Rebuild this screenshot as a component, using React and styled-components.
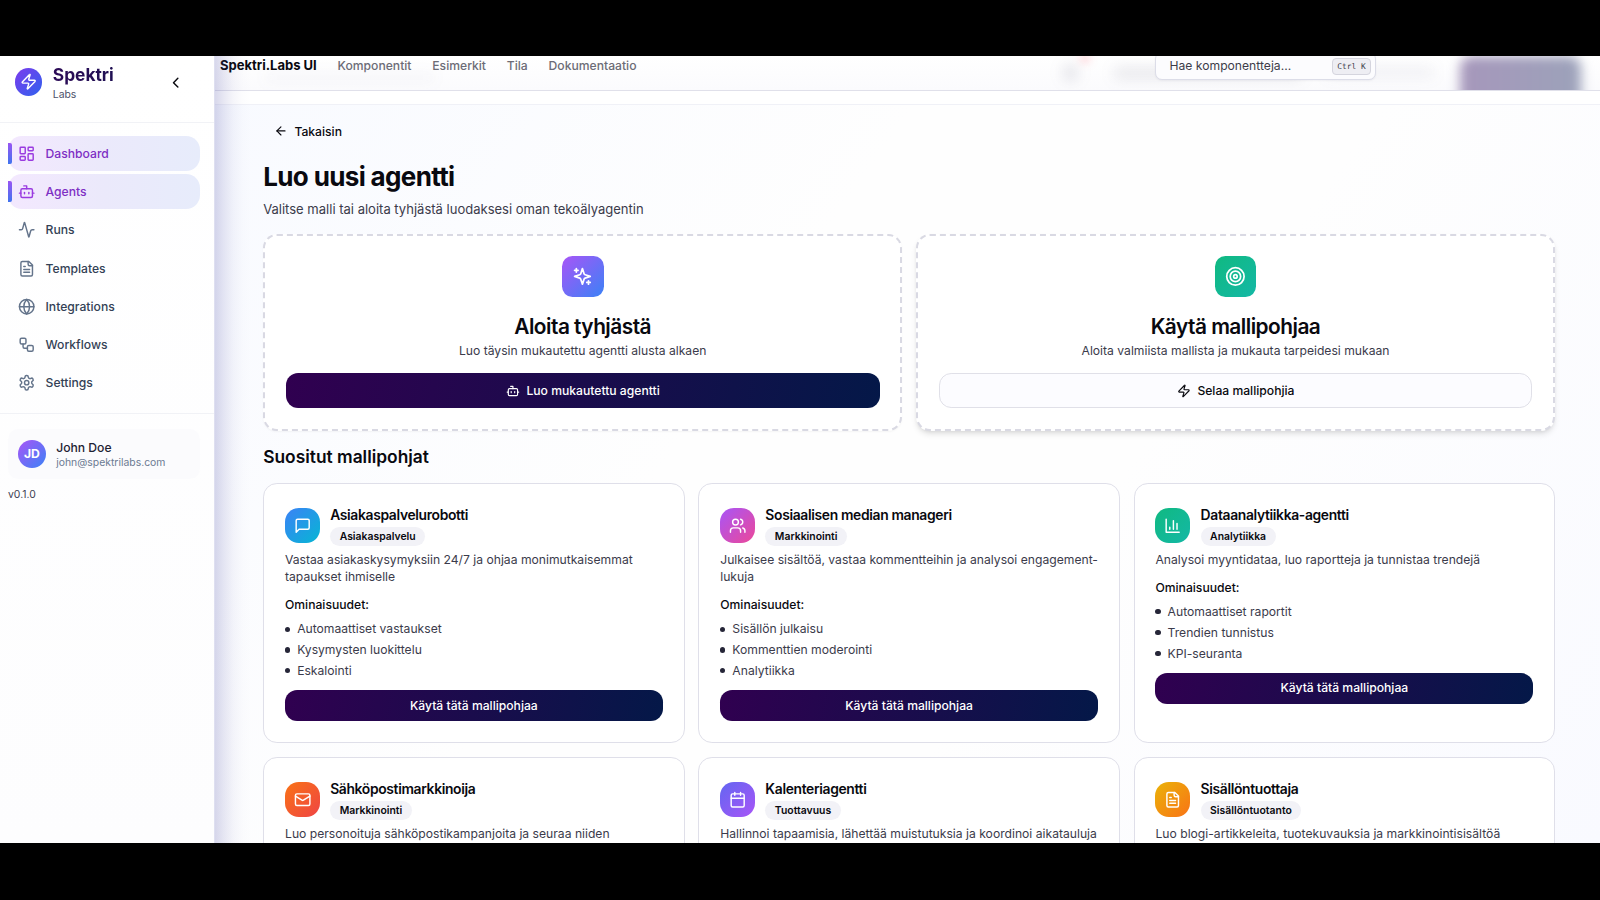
import React from "react";
import styled, { createGlobalStyle, css } from "styled-components";
import { Activity, ArrowLeft, Bot, ChevronLeft, Globe, LayoutDashboard, Target, Users, Workflow, Zap } from "lucide-react";

const GlobalStyle = createGlobalStyle`
  *, *::before, *::after { box-sizing: border-box; }
  html { font-size: 13.889px; }
  body {
    margin: 0;
    background: #000;
    color: #09090f;
    font-family: Inter, "Liberation Sans", sans-serif;
    font-size: 0.875rem;
    line-height: 1.25rem;
  }
  h1, h2, h3, h4, p, ul { margin: 0; padding: 0; }
  button { font: inherit; color: inherit; border: 0; background: none; padding: 0; }
`;

/* ---------- icons ---------- */

const Glyph = styled.svg.attrs({
  viewBox: "0 0 24 24",
  fill: "none",
  stroke: "currentColor",
  strokeWidth: 2,
  strokeLinecap: "round",
  strokeLinejoin: "round",
})``;

const SparklesIcon = () => (
  <Glyph>
    <path d="m12 3-1.912 5.813a2 2 0 0 1-1.275 1.275L3 12l5.813 1.912a2 2 0 0 1 1.275 1.275L12 21l1.912-5.813a2 2 0 0 1 1.275-1.275L21 12l-5.813-1.912a2 2 0 0 1-1.275-1.275L12 3Z" />
    <path d="M5 3v4M19 17v4M3 5h4M17 19h4" />
  </Glyph>
);
const MessageIcon = () => (
  <Glyph><path d="M21 15a2 2 0 0 1-2 2H7l-4 4V5a2 2 0 0 1 2-2h14a2 2 0 0 1 2 2z" /></Glyph>
);
const ChartIcon = () => (
  <Glyph><path d="M3 3v18h18M18 17V9M13 17V5M8 17v-3" /></Glyph>
);
const MailIcon = () => (
  <Glyph>
    <rect width="20" height="16" x="2" y="4" rx="2" />
    <path d="m22 7-8.97 5.7a1.94 1.94 0 0 1-2.06 0L2 7" />
  </Glyph>
);
const CalendarIcon = () => (
  <Glyph>
    <path d="M8 2v4M16 2v4M3 10h18" />
    <rect width="18" height="18" x="3" y="4" rx="2" />
  </Glyph>
);
const FileIcon = () => (
  <Glyph>
    <path d="M15 2H6a2 2 0 0 0-2 2v16a2 2 0 0 0 2 2h12a2 2 0 0 0 2-2V7Z" />
    <path d="M14 2v4a2 2 0 0 0 2 2h4M10 9H8M16 13H8M16 17H8" />
  </Glyph>
);
const GearIcon = () => (
  <Glyph>
    <path d="M12.22 2h-.44a2 2 0 0 0-2 2v.18a2 2 0 0 1-1 1.73l-.43.25a2 2 0 0 1-2 0l-.15-.08a2 2 0 0 0-2.73.73l-.22.38a2 2 0 0 0 .73 2.73l.15.1a2 2 0 0 1 1 1.72v.51a2 2 0 0 1-1 1.74l-.15.09a2 2 0 0 0-.73 2.73l.22.38a2 2 0 0 0 2.73.73l.15-.08a2 2 0 0 1 2 0l.43.25a2 2 0 0 1 1 1.73V20a2 2 0 0 0 2 2h.44a2 2 0 0 0 2-2v-.18a2 2 0 0 1 1-1.73l.43-.25a2 2 0 0 1 2 0l.15.08a2 2 0 0 0 2.73-.73l.22-.39a2 2 0 0 0-.73-2.73l-.15-.08a2 2 0 0 1-1-1.74v-.5a2 2 0 0 1 1-1.74l.15-.09a2 2 0 0 0 .73-2.73l-.22-.38a2 2 0 0 0-2.73-.73l-.15.08a2 2 0 0 1-2 0l-.43-.25a2 2 0 0 1-1-1.73V4a2 2 0 0 0-2-2z" />
    <circle cx="12" cy="12" r="3" />
  </Glyph>
);

/* ---------- shell ---------- */

const Frame = styled.div`
  height: 900px;
  padding: 56px 0 57px;
  background: #000;
  overflow: hidden;
`;

const Shell = styled.div`
  display: flex;
  height: 100%;
  overflow: hidden;
  background: #fff;
`;

/* ---------- sidebar ---------- */

const Sidebar = styled.aside`
  position: relative;
  z-index: 2;
  flex: 0 0 215px;
  border-right: 1px solid #dedff0;
  background: linear-gradient(180deg, #ffffff, #fdfdfe);

  &::after {
    content: "";
    position: absolute;
    top: 0;
    bottom: 0;
    left: calc(100% + 1px);
    width: 36px;
    pointer-events: none;
    background: linear-gradient(
      90deg,
      rgba(76, 76, 165, 0.22),
      rgba(76, 76, 165, 0.13) 25%,
      rgba(76, 76, 165, 0.055) 50%,
      rgba(76, 76, 165, 0.015) 75%,
      rgba(76, 76, 165, 0)
    );
  }
`;

const SidebarHead = styled.div`
  display: flex;
  align-items: flex-start;
  height: 67px;
  padding: 8px 29.5px 0 14.5px;
  border-bottom: 1px solid #f1f2f6;
`;

const Logo = styled.div`
  display: grid;
  place-items: center;
  width: 2rem;
  height: 2rem;
  margin-top: 4px;
  border-radius: 50%;
  background: linear-gradient(135deg, #7c3aed, #2f62ee);
  color: #fff;
  svg { width: 1.25rem; height: 1.25rem; }
`;

const Brand = styled.div`
  flex: 1;
  margin-left: 10.5px;
`;

const BrandName = styled.div`
  font-size: 1.25rem;
  line-height: 22px;
  font-weight: 700;
  background: linear-gradient(90deg, #2c0b57, #14134f);
  background-clip: text;
  color: transparent;
`;

const BrandSub = styled.div`
  margin-top: 2px;
  font-size: 0.75rem;
  line-height: 1rem;
  color: #4b5068;
`;

const Collapse = styled.button`
  display: flex;
  margin-top: 9.5px;
  svg { width: 1.25rem; height: 1.25rem; }
`;

const Nav = styled.nav`
  display: flex;
  flex-direction: column;
  gap: 0.25rem;
  height: 291px;
  padding: 13.3px 14px 0 8px;
  border-bottom: 1px solid #f1f2f6;
`;

const NavItem = styled.a`
  position: relative;
  display: flex;
  align-items: center;
  flex: 0 0 2.5rem;
  gap: 10px;
  padding-left: 10.2px;
  border-radius: 1rem;
  font-weight: 500;
  color: #334155;
  svg { width: 1.25rem; height: 1.25rem; color: #64748b; }

  ${({ $active }) => $active && css`
    color: #7e2fc4;
    background: linear-gradient(90deg, #f3e8fe, #ebe9fb 50%, #e7ecfb);
    svg { color: #9a3be0; }
    &::before {
      content: "";
      position: absolute;
      left: 0;
      top: 7px;
      width: 3.5px;
      height: 1.5rem;
      border-radius: 0 2px 2px 0;
      background: linear-gradient(180deg, #9a55f3, #3f74ee);
    }
  `}
`;

const UserCard = styled.div`
  display: flex;
  align-items: center;
  gap: 10.4px;
  height: 50px;
  margin: 15px 14px 0 8px;
  padding-left: 10px;
  border-radius: 0.75rem;
  background: #fbfbfd;
`;

const Avatar = styled.div`
  display: grid;
  place-items: center;
  width: 2rem;
  height: 2rem;
  border-radius: 50%;
  background: linear-gradient(135deg, #a855f7, #3b82f6);
  color: #fff;
  font-weight: 700;
`;

const UserName = styled.div`
  line-height: 17px;
  font-weight: 500;
  color: #1e2233;
`;

const UserMail = styled.div`
  font-size: 0.75rem;
  line-height: 14px;
  color: #6b7a92;
`;

const Version = styled.div`
  margin: 8.6px 0 0 8px;
  font-size: 0.75rem;
  line-height: 1rem;
  color: #3f4254;
`;

/* ---------- top bar ---------- */

const Content = styled.div`
  position: relative;
  flex: 1;
  display: flex;
  flex-direction: column;
  min-width: 0;
  background: linear-gradient(125deg, #f8faff 0%, #fefefe 38%, #fefefe 62%, #f9faff 100%);
`;

const TopBar = styled.header`
  position: relative;
  flex: 0 0 35px;
  overflow: hidden;
  border-bottom: 1px solid #e0e0ea;
  background: linear-gradient(180deg, #ffffff, #fbfbfd);
`;

const TopRow = styled.div`
  position: relative;
  display: flex;
  align-items: center;
  height: 46px;
  margin-top: -13px;
  padding: 0 224px 0 5px;
`;

const TopBrand = styled.div`
  margin-right: 1.5rem;
  font-size: 0.9375rem;
  font-weight: 700;
`;

const TopLinks = styled.div`
  display: flex;
  flex: 1;
  gap: 1.5rem;
  font-weight: 500;
  color: #6c6c76;
`;

const Search = styled.div`
  display: flex;
  align-items: center;
  justify-content: space-between;
  width: 221px;
  height: 28px;
  padding: 0 4px 0 13.5px;
  border: 1px solid #dcdde8;
  border-radius: 0.5rem;
  background: #fcfcfe;
  color: #3c3c4a;
  box-shadow: 0 1px 2px rgba(20, 20, 50, 0.05);
`;

const Kbd = styled.kbd`
  width: 39px;
  height: 17px;
  border: 1px solid #d5d5de;
  border-radius: 4px;
  background: #eeeef3;
  font: 500 7.9px/15px "DejaVu Sans Mono", "Liberation Mono", monospace;
  text-align: center;
`;

const Smudge = styled.span`
  position: absolute;
  top: ${({ $top }) => $top}px;
  left: ${({ $left }) => $left}px;
  width: ${({ $w }) => $w}px;
  height: ${({ $h }) => $h}px;
  border-radius: 12px;
  background: ${({ $bg }) => $bg};
  filter: blur(${({ $blur }) => $blur || 7}px);
`;

const SubBar = styled.div`
  flex: 0 0 14px;
  background: rgba(255, 255, 255, 0.9);
  border-bottom: 1px solid #f0f1f7;
`;

/* ---------- page ---------- */

const Page = styled.main`
  display: flex;
  flex-direction: column;
  align-items: stretch;
  gap: 1rem;
  flex: 1;
  min-height: 0;
  overflow: hidden;
  padding: 10.7px 45px 0 48.2px;
`;

const Back = styled.button`
  display: flex;
  align-items: center;
  align-self: flex-start;
  flex: none;
  gap: 0.5rem;
  height: 2.25rem;
  padding: 0 0.75rem;
  font-weight: 500;
  svg { width: 1rem; height: 1rem; }
`;

const Title = styled.h1`
  font-size: 1.875rem;
  line-height: 2.25rem;
  font-weight: 700;
  letter-spacing: -0.025em;
`;

const Lead = styled.p`
  margin-top: 0.5rem;
  font-size: 0.9375rem;
  line-height: 1.5rem;
  color: #3b3b4b;
`;

const Options = styled.section`
  display: grid;
  grid-template-columns: repeat(2, 1fr);
  gap: 1rem;
`;

const OptionCard = styled.div`
  display: flex;
  flex-direction: column;
  align-items: center;
  height: 197.3px;
  padding: 20px 20.6px;
  border: 2px dashed #d9d9e3;
  border-radius: 1rem;
  background: #fff;
  box-shadow: ${({ $raised }) => ($raised
    ? "0 4px 6px -1px rgba(0,0,0,.11), 0 2px 4px -2px rgba(0,0,0,.1)"
    : "0 1px 2px rgba(0,0,0,.04)")};
`;

const Tile = styled.div`
  display: grid;
  place-items: center;
  flex: none;
  width: ${({ $large }) => ($large ? "3rem" : "2.5rem")};
  height: ${({ $large }) => ($large ? "3rem" : "2.5rem")};
  border-radius: ${({ $large }) => ($large ? "0.75rem" : "1rem")};
  background: linear-gradient(135deg, ${({ $from }) => $from}, ${({ $to }) => $to});
  color: #fff;
  svg {
    width: ${({ $large }) => ($large ? "1.5rem" : "1.25rem")};
    height: ${({ $large }) => ($large ? "1.5rem" : "1.25rem")};
  }
`;

const OptionTitle = styled.h2`
  margin-top: 15.6px;
  font-size: 1.5rem;
  line-height: 2rem;
  font-weight: 600;
  letter-spacing: -0.025em;
`;

const OptionText = styled.p`
  margin: 1.5px 0 1rem;
  color: #3b3b4b;
`;

const Button = styled.button`
  display: flex;
  align-items: center;
  justify-content: center;
  flex: none;
  gap: 0.5rem;
  width: 100%;
  height: ${({ $small }) => ($small ? "2.25rem" : "2.5rem")};
  border-radius: 0.875rem;
  font-weight: 500;
  color: #fff;
  background: linear-gradient(100deg, #300050, #041848);
  svg { width: 1rem; height: 1rem; }

  ${({ $outline }) => $outline && css`
    color: #09090f;
    background: #fcfcff;
    border: 1px solid #e0e0e8;
  `}
`;

const SectionTitle = styled.h2`
  font-size: 1.25rem;
  line-height: 1.75rem;
  font-weight: 600;
`;

const Templates = styled.section`
  display: grid;
  grid-template-columns: repeat(3, 1fr);
  gap: 1rem;
`;

const Card = styled.article`
  display: flex;
  flex-direction: column;
  height: 18.72rem;
  padding: 1.5rem;
  border: 1px solid #dfdfe9;
  border-radius: 1rem;
  background: #fff;
`;

const CardHead = styled.div`
  display: flex;
  align-items: center;
  gap: 0.75rem;
`;

const CardTitle = styled.h3`
  font-size: 1rem;
  line-height: 1.5rem;
  font-weight: 600;
  letter-spacing: -0.025em;
`;

const Badge = styled.span`
  display: block;
  width: fit-content;
  height: 1.375rem;
  margin-top: 1px;
  padding: 0 9.5px;
  border-radius: 1rem;
  background: #f2f2f7;
  font-size: 0.75rem;
  line-height: 1.375rem;
  font-weight: 600;
`;

const CardText = styled.p`
  margin: 0.375rem -4px 0 0;
  white-space: pre-line;
  color: #3b3b4b;
`;

const Features = styled.h4`
  margin: 0.75rem 0 0.5rem;
  font-size: 0.875rem;
  font-weight: 500;
`;

const FeatureList = styled.ul`
  display: flex;
  flex-direction: column;
  gap: 0.25rem;
  margin-bottom: 0.75rem;
  list-style: none;
  color: #3b3b4b;
`;

const Feature = styled.li`
  display: flex;
  align-items: center;
  gap: 0.5rem;
  &::before {
    content: "";
    width: 5.2px;
    height: 5.2px;
    border-radius: 50%;
    background: #262638;
  }
`;

const navItems = [
  ["Dashboard", LayoutDashboard, true],
  ["Agents", Bot, true],
  ["Runs", Activity],
  ["Templates", FileIcon],
  ["Integrations", Globe],
  ["Workflows", Workflow],
  ["Settings", GearIcon],
];

const templates = [
  { title: "Asiakaspalvelurobotti", tag: "Asiakaspalvelu", icon: MessageIcon, from: "#3b82f6", to: "#06b6d4",
    text: "Vastaa asiakaskysymyksiin 24/7 ja ohjaa monimutkaisemmat tapaukset ihmiselle",
    features: ["Automaattiset vastaukset", "Kysymysten luokittelu", "Eskalointi"] },
  { title: "Sosiaalisen median manageri", tag: "Markkinointi", icon: Users, from: "#a855f7", to: "#ec4899",
    text: "Julkaisee sisältöä, vastaa kommentteihin ja analysoi engagement-\nlukuja",
    features: ["Sisällön julkaisu", "Kommenttien moderointi", "Analytiikka"] },
  { title: "Dataanalytiikka-agentti", tag: "Analytiikka", icon: ChartIcon, from: "#10b981", to: "#14b8a6",
    text: "Analysoi myyntidataa, luo raportteja ja tunnistaa trendejä",
    features: ["Automaattiset raportit", "Trendien tunnistus", "KPI-seuranta"] },
  { title: "Sähköpostimarkkinoija", tag: "Markkinointi", icon: MailIcon, from: "#f97316", to: "#ef4444",
    text: "Luo personoituja sähköpostikampanjoita ja seuraa niiden" },
  { title: "Kalenteriagentti", tag: "Tuottavuus", icon: CalendarIcon, from: "#6366f1", to: "#a855f7",
    text: "Hallinnoi tapaamisia, lähettää muistutuksia ja koordinoi aikatauluja" },
  { title: "Sisällöntuottaja", tag: "Sisällöntuotanto", icon: FileIcon, from: "#eab308", to: "#f97316",
    text: "Luo blogi-artikkeleita, tuotekuvauksia ja markkinointisisältöä" },
];

const TemplateCard = ({ item }) => {
  const Icon = item.icon;
  return (
    <Card>
      <CardHead>
        <Tile $from={item.from} $to={item.to}><Icon /></Tile>
        <div>
          <CardTitle>{item.title}</CardTitle>
          <Badge>{item.tag}</Badge>
        </div>
      </CardHead>
      <CardText>{item.text}</CardText>
      {item.features && (
        <>
          <Features>Ominaisuudet:</Features>
          <FeatureList>
            {item.features.map((f) => <Feature key={f}>{f}</Feature>)}
          </FeatureList>
          <Button $small>Käytä tätä mallipohjaa</Button>
        </>
      )}
    </Card>
  );
};

export default function App() {
  return (
    <Frame>
      <GlobalStyle />
      <Shell>
        <Sidebar>
          <SidebarHead>
            <Logo><Zap /></Logo>
            <Brand>
              <BrandName>Spektri</BrandName>
              <BrandSub>Labs</BrandSub>
            </Brand>
            <Collapse><ChevronLeft /></Collapse>
          </SidebarHead>
          <Nav>
            {navItems.map(([label, Icon, active]) => (
              <NavItem key={label} $active={active}><Icon />{label}</NavItem>
            ))}
          </Nav>
          <UserCard>
            <Avatar>JD</Avatar>
            <div>
              <UserName>John Doe</UserName>
              <UserMail>john@spektrilabs.com</UserMail>
            </div>
          </UserCard>
          <Version>v0.1.0</Version>
        </Sidebar>

        <Content>
          <TopBar>
            <Smudge $left={50} $top={18} $w={170} $h={7} $bg="rgba(90,90,130,.06)" />
            <Smudge $left={848} $top={8} $w={15} $h={17} $bg="rgba(90,90,120,.16)" />
            <Smudge $left={866} $top={-2} $w={8} $h={8} $bg="rgba(255,70,90,.35)" $blur={5} />
            <Smudge $left={898} $top={11} $w={190} $h={12} $bg="rgba(80,80,110,.12)" />
            <Smudge $left={1110} $top={11} $w={110} $h={10} $bg="rgba(80,80,110,.08)" />
            <Smudge $left={1245} $top={0} $w={121} $h={54} $bg="linear-gradient(90deg, #a697bb, #9ca2ba)" $blur={6} />
            <TopRow>
              <TopBrand>Spektri.Labs UI</TopBrand>
              <TopLinks>
                <span>Komponentit</span>
                <span>Esimerkit</span>
                <span>Tila</span>
                <span>Dokumentaatio</span>
              </TopLinks>
              <Search>
                Hae komponentteja...
                <Kbd>Ctrl K</Kbd>
              </Search>
            </TopRow>
          </TopBar>
          <SubBar />
          <Page>
            <Back><ArrowLeft />Takaisin</Back>
            <div>
              <Title>Luo uusi agentti</Title>
              <Lead>Valitse malli tai aloita tyhjästä luodaksesi oman tekoälyagentin</Lead>
            </div>
            <Options>
              <OptionCard>
                <Tile $large $from="#a855f7" $to="#3b82f6"><SparklesIcon /></Tile>
                <OptionTitle>Aloita tyhjästä</OptionTitle>
                <OptionText>Luo täysin mukautettu agentti alusta alkaen</OptionText>
                <Button><Bot />Luo mukautettu agentti</Button>
              </OptionCard>
              <OptionCard $raised>
                <Tile $large $from="#10b981" $to="#14b8a6"><Target /></Tile>
                <OptionTitle>Käytä mallipohjaa</OptionTitle>
                <OptionText>Aloita valmiista mallista ja mukauta tarpeidesi mukaan</OptionText>
                <Button $outline><Zap />Selaa mallipohjia</Button>
              </OptionCard>
            </Options>
            <SectionTitle>Suositut mallipohjat</SectionTitle>
            <Templates>
              {templates.map((t) => <TemplateCard key={t.title} item={t} />)}
            </Templates>
          </Page>
        </Content>
      </Shell>
    </Frame>
  );
}
